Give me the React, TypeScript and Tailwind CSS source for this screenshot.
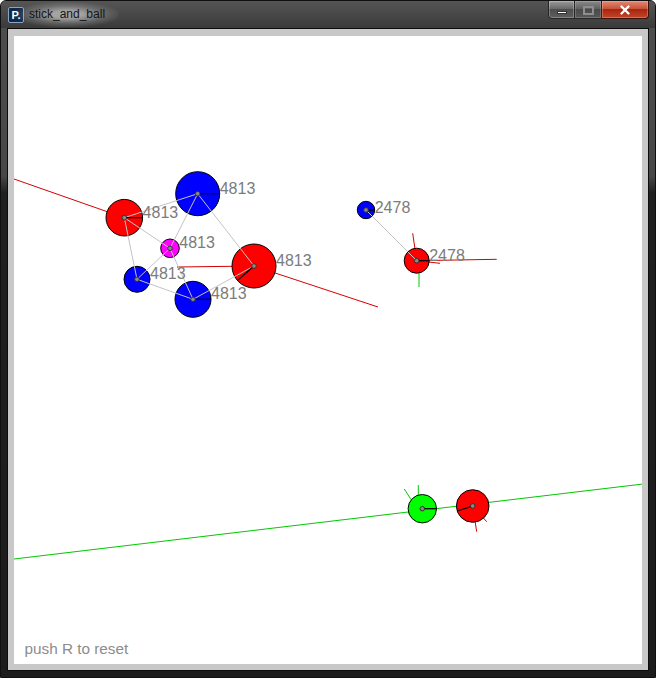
import { X } from "lucide-react"

type Ball = { x: number; y: number; r: number; fill: string; label?: string; ly?: number }

const balls: Ball[] = [
  { x: 110.3, y: 181.7, r: 18.3, fill: "#ff0000", label: "4813" },
  { x: 183.7, y: 157.7, r: 22, fill: "#0000ff", label: "4813" },
  { x: 156, y: 212.3, r: 9.3, fill: "#ff00ff", label: "4813" },
  { x: 240, y: 230, r: 22, fill: "#ff0000", label: "4813" },
  { x: 123, y: 243.3, r: 13, fill: "#0000ff", label: "4813" },
  { x: 179, y: 263.3, r: 18, fill: "#0000ff", label: "4813" },
  { x: 352, y: 174, r: 8.7, fill: "#0000ff", label: "2478", ly: 3 },
  { x: 402.7, y: 224.7, r: 12.5, fill: "#ff0000", label: "2478" },
  { x: 408.3, y: 472.7, r: 14.2, fill: "#00ff00" },
  { x: 458.7, y: 470, r: 16.3, fill: "#ff0000" },
]

// springs between ball indexes
const springs: [number, number][] = [
  [0, 1], [0, 2], [0, 4], [1, 2], [1, 3], [2, 4], [2, 5], [4, 5], [5, 3], [6, 7],
]

// force lines drawn under the balls
const forces: { x1: number; y1: number; x2: number; y2: number; c: string }[] = [
  { x1: 0, y1: 143, x2: 110.3, y2: 181.7, c: "#d40000" },
  { x1: 240, y1: 230, x2: 364, y2: 271, c: "#d40000" },
  { x1: 163, y1: 231, x2: 240, y2: 230, c: "#d40000" },
  { x1: 402.7, y1: 224.7, x2: 482.7, y2: 223.3, c: "#d40000" },
  { x1: 402.7, y1: 224.7, x2: 426, y2: 227.3, c: "#d40000" },
  { x1: 402.7, y1: 224.7, x2: 398.7, y2: 197.3, c: "#d40000" },
  { x1: 405, y1: 230, x2: 405, y2: 251, c: "#00c800" },
  { x1: 458.7, y1: 470, x2: 462.7, y2: 495.7, c: "#d40000" },
  { x1: 458.7, y1: 470, x2: 472.7, y2: 485.7, c: "#d40000" },
  { x1: 0, y1: 523, x2: 629, y2: 448, c: "#00c800" },
  { x1: 390.3, y1: 453, x2: 397, y2: 463.5, c: "#00c800" },
  { x1: 404.3, y1: 449, x2: 404.3, y2: 459, c: "#00c800" },
]

// heading lines drawn on top
const heads: [number, number, number, number][] = [
  [110.3, 181.7, 128.6, 181.7],
  [183.7, 157.7, 205.7, 157.7],
  [240, 230, 224, 244],
  [179, 263.3, 197, 263.3],
  [352, 174, 360.7, 174],
  [402.7, 224.7, 415.2, 224.7],
  [408.3, 472.7, 422.5, 472.7],
  [458.7, 470, 444.3, 474.7],
]

function Sketch() {
  return (
    <svg width="628" height="628" className="block" style={{ fontFamily: '"Liberation Sans", Arial, sans-serif' }}>
      {forces.map((f, i) => (
        <line key={i} x1={f.x1} y1={f.y1} x2={f.x2} y2={f.y2} stroke={f.c} strokeWidth={1} />
      ))}
      {balls.map((b, i) => (
        <circle key={i} cx={b.x} cy={b.y} r={b.r} fill={b.fill} stroke="#000" strokeWidth={1} />
      ))}
      {springs.map(([a, b], i) => (
        <line key={i} x1={balls[a].x} y1={balls[a].y} x2={balls[b].x} y2={balls[b].y} stroke="#c4c4c4" strokeWidth={1} />
      ))}
      {heads.map(([x1, y1, x2, y2], i) => (
        <line key={i} x1={x1} y1={y1} x2={x2} y2={y2} stroke="#000" strokeWidth={1.3} />
      ))}
      {balls.map((b, i) => (
        <circle key={i} cx={b.x} cy={b.y} r={2.3} fill="#8a8a8a" stroke="#333" strokeWidth={1} />
      ))}
      {balls.map((b, i) =>
        b.label ? (
          <text key={i} x={b.x + b.r} y={b.y + (b.ly ?? 0)} fontSize={16} fill="#7c7c7c">
            {b.label}
          </text>
        ) : null
      )}
      <text x={10.5} y={617.5} fontSize={15.3} fill="#8c8c8c">
        push R to reset
      </text>
    </svg>
  )
}

export default function App() {
  return (
    <div className="w-[656px] h-[678px] flex flex-col rounded-t-[6px] border border-[#101010] bg-[linear-gradient(to_bottom,#4e4e4e_0px,#474747_175px,#202020_192px,#1c1c1c_100%)] overflow-hidden">
      <div className="h-[27px] flex items-start bg-[linear-gradient(to_bottom,#555555,#3a3a3a)]">
        <div className="mt-[6px] ml-[7px] w-[16px] h-[16px] rounded-[2px] border border-[#8da2bd] bg-[#0f2a4a] flex items-end justify-center pb-[1px]">
          <span className="text-[11px] leading-none font-bold text-white" style={{ fontFamily: '"Liberation Sans", Arial, sans-serif' }}>
            P.
          </span>
        </div>
        <span
          className="ml-[-9px] mt-[1px] px-[14px] py-[5px] text-[12px] leading-[15px] text-[#141414] bg-[radial-gradient(ellipse_at_center,rgba(225,225,225,0.6)_20%,rgba(200,200,200,0.25)_50%,rgba(200,200,200,0)_75%)]"
          style={{ fontFamily: '"Liberation Sans", Arial, sans-serif' }}
        >
          stick_and_ball
        </span>
        <div className="ml-auto mr-[6px] flex h-[19px] mt-[-1px]">
          <div className="w-[27px] h-[19px] rounded-bl-[4px] border border-[#262626] bg-[linear-gradient(to_bottom,#9a9a9a,#6a6a6a_45%,#4e4e4e_50%,#5e5e5e)] flex items-end justify-center pb-[4px] shadow-[inset_0_0_0_1px_rgba(255,255,255,0.25)]">
            <div className="w-[10px] h-[3px] bg-white border border-[#333]" />
          </div>
          <div className="w-[27px] h-[19px] border border-l-0 border-[#262626] bg-[linear-gradient(to_bottom,#8a8a8a,#616161_45%,#4b4b4b_50%,#585858)] flex items-center justify-center shadow-[inset_0_0_0_1px_rgba(255,255,255,0.18)]">
            <div className="w-[11px] h-[9px] border-2 border-[#8e8e8e] mt-[1px]" />
          </div>
          <div className="w-[47px] h-[19px] rounded-br-[4px] border border-l-0 border-[#3a1208] bg-[linear-gradient(to_bottom,#e08a76,#c9533a_45%,#a9260e_50%,#c4452a)] flex items-center justify-center shadow-[inset_0_0_0_1px_rgba(255,220,200,0.3)]">
            <X className="w-[14px] h-[14px] text-white" strokeWidth={4} />
          </div>
        </div>
      </div>
      <div className="flex-1 px-[6px] pb-[6px]">
        <div className="border border-[#0c0c0c] bg-[#c8c8c8] pt-[7px] px-[6px] pb-[6px]">
          <div className="w-[628px] h-[628px] bg-white">
            <Sketch />
          </div>
        </div>
      </div>
    </div>
  )
}
